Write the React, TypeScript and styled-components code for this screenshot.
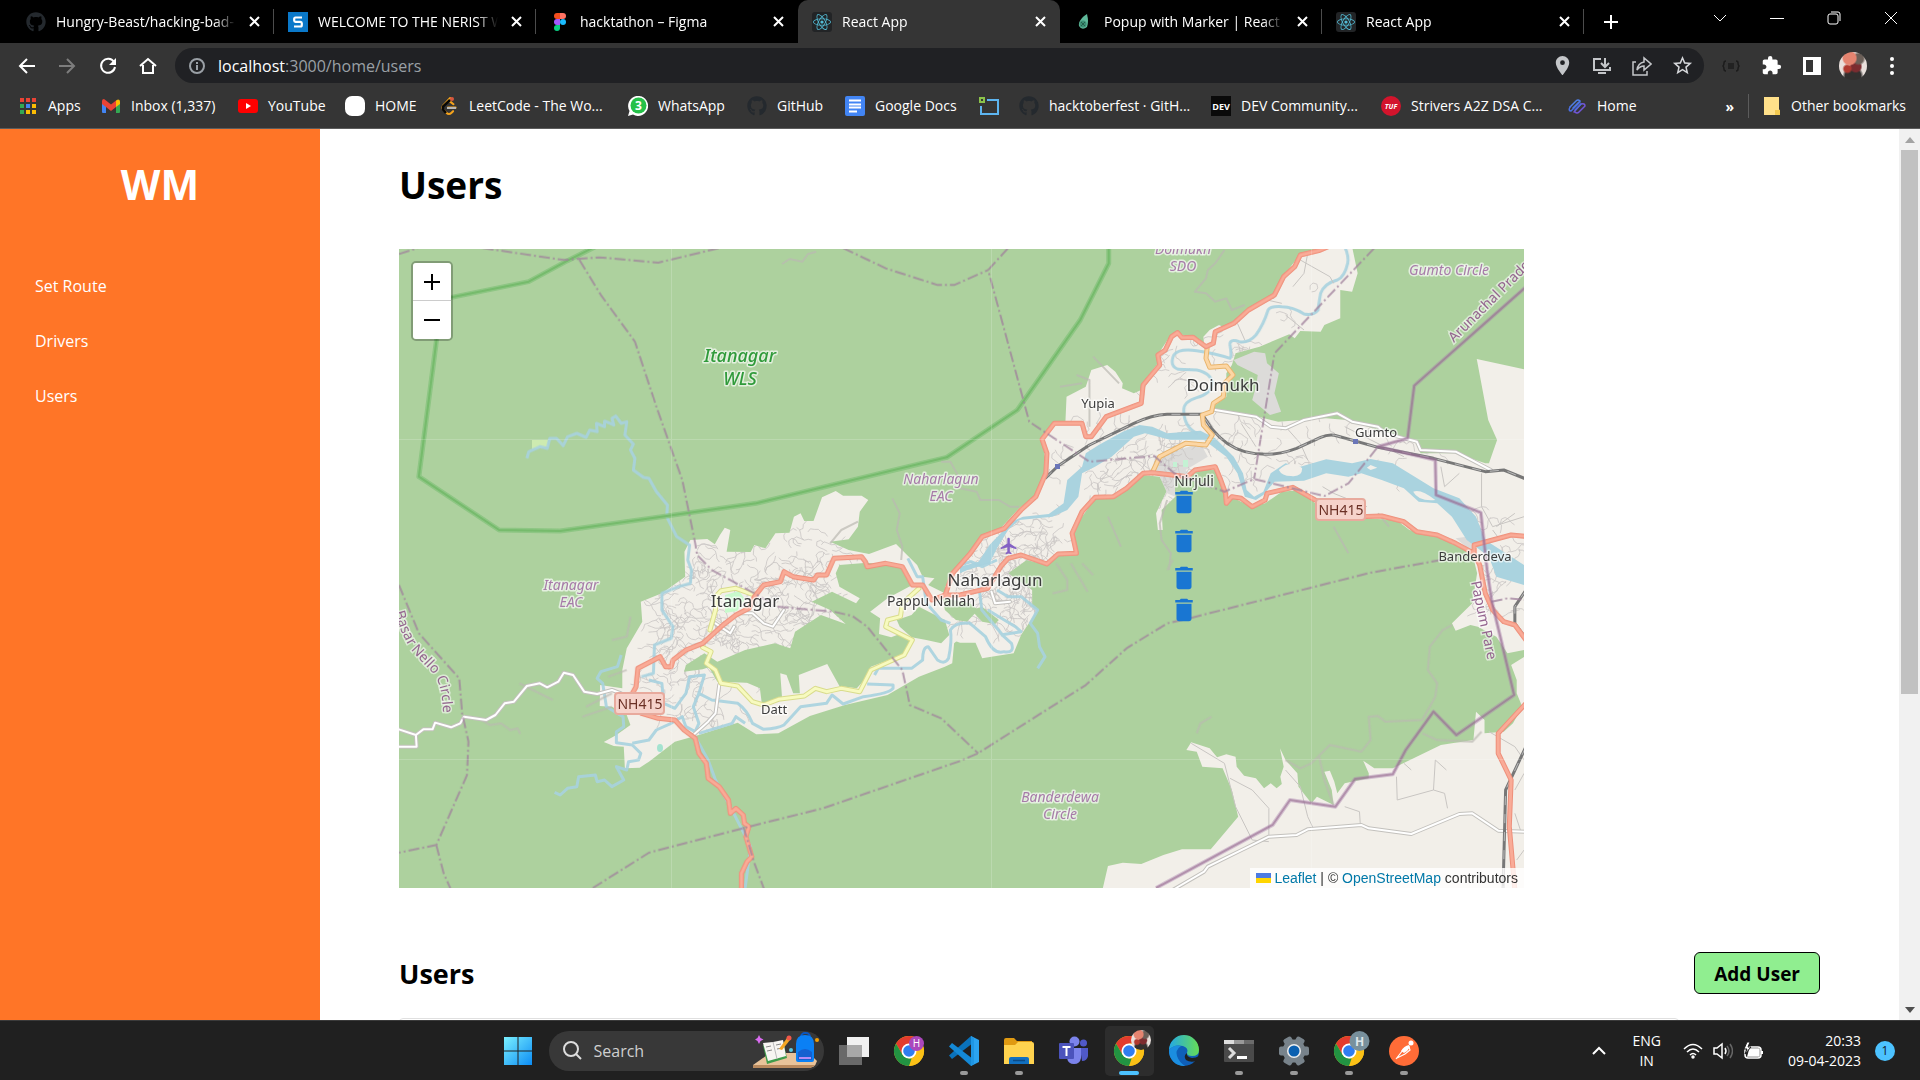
import React from 'react';
import styled, { createGlobalStyle } from 'styled-components';
import { FaGithub, FaReact } from 'react-icons/fa';
import { MdDelete, MdExtension, MdFlight, MdLocationOn, MdStarBorder } from 'react-icons/md';
import { SiLeetcode } from 'react-icons/si';

const ui = '"Segoe UI", "Open Sans", "Noto Sans", sans-serif';
const mapFont = '"Noto Sans", "Open Sans", sans-serif';

const GlobalStyle = createGlobalStyle`
  *, *::before, *::after { box-sizing: border-box; }
  html, body { margin: 0; height: 100%; overflow: hidden; }
  body { font-family: ${ui}; background: #fff; }
  button { font: inherit; color: inherit; background: none; border: 0; padding: 0; cursor: pointer; }
  a { color: inherit; text-decoration: none; }
  h1, h2, p, ul { margin: 0; padding: 0; }
  svg { display: block; flex: none; }
`;

const Screen = styled.div`
  display: flex;
  flex-direction: column;
  height: 100vh;
`;

/* ---------- browser chrome ---------- */

const Browser = styled.header`
  background: #353535;
  border-bottom: 1px solid #5c5c5c;
  color: #fff;
  font-size: 14px;
`;

const TabStrip = styled.div`
  display: flex;
  height: 43px;
  padding-left: 12px;
  background: #000;
`;

const Tab = styled.div<{ $active?: boolean; $divider?: boolean }>`
  position: relative;
  display: flex;
  align-items: center;
  flex: 0 1 262px;
  min-width: 0;
  gap: 10px;
  padding: 0 12px 0 14px;
  border-radius: 10px 10px 0 0;
  background: ${p => (p.$active ? '#353535' : 'transparent')};
  ${p =>
    p.$divider &&
    `&::after { content: ''; position: absolute; right: 0; top: 9px; width: 1px; height: 25px; background: #4c4c4c; }`}
`;

const TabTitle = styled.span`
  flex: 1;
  min-width: 0;
  overflow: hidden;
  white-space: nowrap;
  line-height: 20px;
  mask-image: linear-gradient(90deg, #000 88%, transparent);
`;

const IconButton = styled.button<{ $w?: number }>`
  display: flex;
  align-items: center;
  justify-content: center;
  flex: none;
  width: ${p => p.$w ?? 16}px;
`;

const WindowControls = styled.div`
  display: flex;
  margin-left: auto;
  height: 36px;
`;

const Toolbar = styled.div`
  display: flex;
  align-items: center;
  height: 45px;
  padding: 0 10px 0 7px;
`;

const Omnibox = styled.label`
  display: flex;
  align-items: center;
  flex: 1;
  height: 35px;
  margin: 0 7px;
  padding: 0 2px 0 13px;
  border-radius: 18px;
  background: #202124;
  position: relative;
`;

const Address = styled.input`
  position: absolute;
  inset: 0 170px 0 42px;
  border: 0;
  outline: 0;
  background: transparent;
  color: transparent;
  font: 16px ${ui};
`;

const Url = styled.span`
  flex: 1;
  padding-left: 12px;
  font-size: 16px;
  color: #9aa0a6;
  b { font-weight: 400; color: #fff; }
`;

const Avatar = styled.span<{ $size: number }>`
  display: block;
  width: ${p => p.$size}px;
  height: ${p => p.$size}px;
  border-radius: 50%;
  background:
    radial-gradient(circle at 38% 22%, #e58470 0 22%, transparent 28%),
    radial-gradient(circle at 70% 24%, #6b5f58 0 16%, transparent 24%),
    radial-gradient(circle at 30% 60%, #b0392f 0 12%, transparent 20%),
    radial-gradient(circle at 60% 52%, #7c2c30 0 22%, transparent 30%),
    radial-gradient(circle at 50% 86%, #33302f 0 28%, transparent 38%),
    #e9e0dc;
`;

const Bookmarks = styled.nav`
  display: flex;
  align-items: center;
  height: 40px;
  padding: 0 14px 4px 18px;
`;

const Bookmark = styled.a<{ $w?: number }>`
  display: flex;
  align-items: center;
  gap: 10px;
  flex: 0 1 ${p => (p.$w ? `${p.$w}px` : 'auto')};
  min-width: 0;
  white-space: nowrap;
  line-height: 20px;
`;

const Separator = styled.i`
  width: 1px;
  height: 24px;
  margin: 0 14px;
  background: #5c5c5c;
`;

const More = styled.button`
  margin-left: auto;
  font-weight: 700;
  font-size: 14px;
`;

/* ---------- page ---------- */

const Page = styled.div`
  display: flex;
  flex: 1;
  min-height: 0;
  background: #fff;
`;

const Sidebar = styled.aside`
  flex: 0 0 320px;
  background: #ff7527;
  color: #fff;
`;

const Brand = styled.p`
  padding-top: 28px;
  text-align: center;
  font-size: 41px;
  line-height: 54px;
  font-weight: 700;
`;

const Menu = styled.ul`
  list-style: none;
  margin-top: 48px;
  padding-left: 35px;
  font-size: 16px;
  line-height: 55px;
`;

const Main = styled.main`
  flex: 1;
  min-width: 0;
  padding: 0 79px;
  overflow: hidden;
`;

const Title = styled.h1`
  padding: 31px 0 39px;
  font-size: 37px;
  line-height: 50px;
`;

const SectionHead = styled.div`
  display: flex;
  align-items: center;
  justify-content: space-between;
  margin: 64px 0 24px;
`;

const SectionTitle = styled.h2`
  padding-top: 2px;
  font-size: 27px;
  line-height: 40px;
`;

const AddButton = styled.button`
  height: 42px;
  padding: 2px 19px 0;
  border: 1px solid #000;
  border-radius: 6px;
  background: #90ee90;
  font-size: 19px;
  line-height: 26px;
  font-weight: 700;
`;

const TableCard = styled.section`
  max-width: 1280px;
  height: 200px;
  border: 1px solid #e0e0e0;
  border-radius: 4px;
`;

const ScrollTrack = styled.div`
  display: flex;
  flex-direction: column;
  align-items: center;
  justify-content: space-between;
  flex: 0 0 21px;
  padding: 8px 0 7px;
  background: #f1f1f1;
`;

const ScrollArea = styled.div`
  flex: 1;
  width: 17px;
  padding: 7px 0;
`;

const ScrollThumb = styled.div`
  height: 64%;
  background: #c1c1c1;
`;

/* ---------- map ---------- */

const MapBox = styled.section`
  position: relative;
  width: 100%;
  max-width: 1125px;
  height: 639px;
  overflow: hidden;
  background: #add19e;
`;

const ZoomControl = styled.div`
  position: absolute;
  left: 12px;
  top: 12px;
  width: 42px;
  border: 2px solid rgba(0, 0, 0, 0.25);
  border-radius: 5px;
  background-clip: padding-box;
`;

const ZoomButton = styled.button`
  display: flex;
  align-items: center;
  justify-content: center;
  width: 38px;
  height: 38px;
  background: #fff;
  &:first-child { border-bottom: 1px solid #ccc; border-radius: 3px 3px 0 0; }
  &:last-child { border-radius: 0 0 3px 3px; }
`;

const Marker = styled.button<{ $x: number; $y: number }>`
  position: absolute;
  left: ${p => p.$x}px;
  top: ${p => p.$y}px;
  color: #1976d2;
`;

const Attribution = styled.div`
  position: absolute;
  right: 0;
  bottom: 0;
  display: flex;
  align-items: center;
  gap: 3px;
  height: 20px;
  padding: 0 6px;
  background: rgba(255, 255, 255, 0.8);
  color: #333;
  font: 14px/20px "Liberation Sans", Arial, sans-serif;
  a { color: #0078a8; }
`;

// The map is traced in four sheets, each with its own origin.
const sheets = {
  a: 'translate(390 240) scale(.3699 .33333)',
  b: 'translate(960 240) scale(.3699 .33333)',
  c: 'translate(390 560) scale(.3699 .33333)',
  d: 'translate(960 560) scale(.3699 .33333)',
};
type SheetPaths = { a?: string; b?: string; c?: string; d?: string };

const Layer = ({ a, b, c, d, ...rest }: SheetPaths & Record<string, unknown>) => (
  <g strokeLinejoin="round" fill="none" {...rest}>
    {a && <path d={a} transform={sheets.a} vectorEffect="non-scaling-stroke" />}
    {b && <path d={b} transform={sheets.b} vectorEffect="non-scaling-stroke" />}
    {c && <path d={c} transform={sheets.c} vectorEffect="non-scaling-stroke" />}
    {d && <path d={d} transform={sheets.d} vectorEffect="non-scaling-stroke" />}
  </g>
);

const Road = ({ paths, casing, fill, w }: { paths: SheetPaths; casing: string; fill: string; w: number }) => (
  <>
    <Layer {...paths} stroke={casing} strokeWidth={w} strokeLinecap="round" />
    <Layer {...paths} stroke={fill} strokeWidth={w - 2} strokeLinecap="round" />
  </>
);

const land: SheetPaths = {
  c: 'M635,625L632,560 605,558 578,546 612,525 650,495 640,465 600,440 567,438 568,375 628,385 628,330 640,265 682,185 678,125 735,100 798,50 796,-25 812,-60 858,-63 878,-47 892,-75 905,-97 920,-90 910,-25 975,-24 985,-45 1015,-35 1042,-80 1080,-82 1092,-130 1110,-140 1120,-117 1145,-117 1168,-188 1205,-207 1225,-193 1275,-193 1293,-180 1270,-145 1265,-100 1240,-62 1190,-55 1240,-30 1295,-18 1368,-48 1425,15 1440,50 1472,55 1455,75 1500,100 1580,100 1580,200 1525,250 1520,310 1500,320 1430,350 1345,405 1230,435 1135,468 1050,520 990,523 940,488 835,525 770,545 700,605 675,623Z',
  b: 'M-40,1065L-40,1040 -5,985 25,945 60,885 110,865 160,805 205,770 235,690 222,600 250,550 285,545 288,470 340,440 355,390 398,375 420,395 440,430 438,445 470,460 490,450 500,420 535,370 540,335 570,285 590,278 660,315 658,290 675,270 700,255 715,262 780,210 850,165 880,100 915,50 975,20 1060,20 1075,100 1060,155 1028,150 1028,235 985,255 975,275 920,273 905,295 890,283 810,320 745,340 735,375 720,400 720,470 690,495 685,510 770,520 860,545 990,535 1045,540 1130,570 1230,600 1245,640 1340,640 1420,670 1430,670 1452,600 1428,540 1397,357 1525,388 1568,388 1568,1220 1480,1240 1450,1190 1400,1160 1380,1155 1340,1172 1330,1150 1385,1090 1398,1000 1385,940 1340,905 1280,885 1215,870 1180,840 1090,835 960,790 920,750 870,755 825,790 790,800 740,775 718,790 710,730 690,690 640,690 620,710 580,720 582,770 545,810 548,870 535,870 530,820 560,750 540,710 495,705 460,745 410,775 365,775 330,830 305,880 315,940 260,945 235,975 180,960 130,1000 195,1050 195,1100 210,1110 165,1185 145,1240 85,1250 60,1255 42,1208 0,1208 -20,1200 -40,1130Z',
  d: 'M385,990L400,918 440,908 490,912 550,885 600,868 678,868 752,770 735,690 710,625 655,620 640,575 612,570 625,547 675,565 695,592 720,583 745,590 748,620 768,647 800,655 822,685 840,670 856,685 870,672 866,650 875,620 865,565 880,600 912,640 915,680 950,730 965,710 1010,735 1005,690 985,635 1000,632 1012,665 1020,700 1040,670 1105,655 1105,640 1090,602 1120,625 1170,625 1300,555 1330,550 1388,540 1395,455 1418,480 1418,520 1470,515 1495,490 1520,440 1505,400 1505,360 1490,315 1540,280V1000H385Z',
};

const woods: SheetPaths = {
  c: 'M1205,40L1215,15 1290,8 1380,20 1412,75 1345,115 1298,155 1325,175 1322,222 1355,232 1378,222 1410,245 1385,285 1300,320 1290,350 1262,385 1215,378 1182,312 1105,345 1108,400 1090,400 1072,345 1055,340 1060,415 1005,430 1000,385 965,368 885,365 862,322 845,328 795,335 800,315 850,280 885,305 960,270 1040,250 1082,265 1095,215 1165,165 1232,192 1190,150 1140,125 1195,95 1260,130 1270,115 1215,80ZM1378,200L1370,180 1410,165 1430,140 1500,180 1512,225 1490,250 1450,240 1410,232ZM1495,115L1568,130 1590,150 1560,185 1530,180 1500,150Z',
  d: 'M30,150L60,140 105,180 95,192 60,185Z',
};

const greyAreas: SheetPaths = {
  b: 'M740,360L795,335 825,340 830,370 862,400 850,460 868,515 838,525 790,480 800,440 805,405 750,375ZM530,650L650,610 670,650 610,690 620,705 580,720 582,770 560,760 540,710 525,700ZM1340,895L1370,890 1400,910 1385,935Z',
};

const waterAreas: SheetPaths = {
  b: 'M340,640L375,615 440,575 485,555 520,560 560,580 650,572 690,595 740,650 765,700 775,750 795,770 820,755 840,700 880,670 920,680 990,658 1060,670 1110,657 1170,670 1280,745 1350,775 1395,830 1420,900 1525,975 1568,1000 1568,1040 1525,1035 1450,1010 1430,950 1370,900 1330,830 1290,790 1240,785 1200,745 1140,720 1085,700 1050,710 990,700 930,722 850,725 820,765 800,780 770,770 750,700 720,650 660,600 570,600 500,580 470,590 440,620 410,650 365,680 330,700 320,770 290,810 250,830 160,840 130,870 100,925 80,970 20,990 0,1000 0,980 50,965 80,915 140,845 170,830 240,822 280,790 290,720 330,680Z',
};

const islands: SheetPaths = {
  b: 'M862,690Q895,655 925,685Q925,712 895,708Q870,708 862,690ZM1100,683L1110,675 1128,683 1110,690ZM1225,755Q1245,745 1285,780Q1240,785 1225,755Z',
};

const rivers: SheetPaths = {
  a: 'M370,655L375,635 405,620 425,625 432,595 450,595 468,617 480,590 505,580 530,592 540,570 560,575 558,550 580,560 580,543 605,555 600,535 610,528 625,550 640,545 635,585 658,612 650,630 662,655 658,690 685,712 700,715 720,755 750,795 748,830 775,890 810,915 805,960 815,990 812,1030 780,1040 735,1060 735,1110 765,1160 760,1195 715,1215 712,1300 680,1310',
  b: 'M1040,20Q1052,50 1048,70Q1040,110 1020,120Q985,130 975,160Q970,190 968,210Q955,228 930,222Q900,200 870,200Q838,198 833,210Q820,255 800,285Q780,310 755,305Q728,295 730,315Q735,350 730,355Q690,340 640,332Q590,325 578,345Q565,378 590,388L640,390Q680,400 682,430Q680,460 640,473Q605,485 605,510Q605,560 640,580',
  c: 'M625,285L615,320 570,335 560,355 575,370 585,440 630,470 632,500 612,515 612,548 655,555 678,580 672,600 645,605 640,630 612,620 632,660 600,680 580,660 560,665 555,645 510,650 505,680 480,685 460,705 445,697M655,550L700,540 720,510 760,490 790,470 800,500 825,515 835,490 820,440 835,400 850,345 810,350 800,400 770,445 740,430 735,370 700,360M835,400L870,420 940,430Q965,450 980,490L1010,508Q1050,505 1065,495L1110,440 1180,430 1195,405 1225,432 1280,410Q1350,400 1360,385L1360,375 1290,372M1310,345L1320,325 1410,325 1440,300Q1440,260 1455,260L1480,300Q1500,315 1510,295Q1520,240 1515,210Q1530,185 1568,190L1610,230Q1630,285 1660,275Q1690,280 1680,250L1660,230 1600,150 1590,60M835,520L925,490 935,470 960,490M1400,-5L1425,50 1440,50 1450,130 1490,180 1515,190M825,530L860,600 880,660 920,740 975,860 960,984',
  d: 'M100,90L130,110 165,110 210,150 190,190 210,220 215,260 230,290 210,325M75,150L150,200 165,215 110,225M0,15L30,5 60,20 100,0',
};

const tracks: SheetPaths = {
  a: 'M1060,72L1080,57 1115,65 1130,42 1152,35M1490,665L1515,665 1535,705M1358,775L1378,820 1370,870 1385,920 1382,960M1265,845L1220,870 1190,910',
  b: 'M715,30L690,70 670,90 665,115 635,155 665,160 690,185 720,175 735,210 770,195M0,745L45,755 55,780 105,780 135,800 160,800M560,780L540,850 545,900 570,940 565,990M315,405L350,420 350,560M360,350L430,430M270,440L330,430M1130,820L1160,860M400,830L435,920M1010,860L1050,940',
  c: 'M240,475L270,495 300,490 325,510 345,505 352,522M350,370L440,420M530,440L600,400M520,470L600,440M650,170L640,230 600,240M590,350L640,330',
  d: 'M1330,195L1305,210 1270,260 1265,330 1290,370 1285,410 1250,480 1150,485 1130,468 1105,470 1110,540 1085,575 1000,555 950,610 920,625 880,600M1250,520L1290,540 1385,545 1410,515M640,520L650,490 680,470M250,100L290,90 290,60 260,10M300,10L345,95M330,10L360,45M970,585L985,660 1010,735M560,30L575,0',
};

const lanes: SheetPaths = {
  b: 'M920,60L1000,110 1010,130M940,40L930,100 900,140M830,180L870,190M880,225L930,270M750,250L770,300M880,560L920,610 940,660M760,550L800,620M1040,560L1200,650M1410,700L1410,800 1440,860 1525,830M1300,680L1310,740 1350,700M1450,860L1500,820M1440,870L1460,900M980,740L1010,760 1100,800',
  d: 'M625,550L715,610 745,740 790,840 835,845M730,655L790,690 835,745 835,830M880,630L920,680 940,770 955,805M1180,650L1182,720 1280,690 1285,600 1315,630M1280,690L1310,700 1318,745M1040,740L1080,755 1082,790M1430,515L1500,560 1525,600M1500,690L1525,640M1500,760L1515,810M1505,900L1525,870M1200,610L1220,630',
};

const trunk: SheetPaths = {
  b: 'M1000,18L970,32 920,45 905,80 875,110 850,165 780,210 740,250 690,275 685,310 665,320 630,292 600,293 588,278 572,290 555,330 535,345 540,375 495,435 490,490 395,530 355,590 340,590 330,550 255,550 222,598 235,640 232,700 205,770 165,810 120,865 60,890 28,940 -20,1000 -40,1065M-40,1065L0,1065 75,1045 110,980 130,955 165,945 235,972 265,942 315,940 303,880 330,815 365,772 415,770 450,745 495,700 520,698 615,710 635,690 690,680 705,720 718,760 720,790 735,770 760,775 790,800 825,780 830,760 900,742 960,780 1080,830 1140,828 1200,845 1235,875 1290,885 1340,910 1390,940 1405,975 1420,1060 1440,1110 1470,1145 1500,1155 1530,1200M1390,940L1390,915 1430,903 1490,885 1540,890',
  c: 'M1500,105L1465,120 1440,75 1412,75 1385,20 1340,10 1290,20 1285,5 1275,-10 1200,-5 1180,45 1155,45 1145,60 1090,50 1065,35 1055,65 1010,75 985,110 970,145 935,165 900,195 845,250 800,270 765,300 760,320 745,320 730,290 670,325 665,380 650,410 680,460 725,475 770,480 795,510 825,535 835,580 855,610 860,655 890,680 915,720 920,760 935,745 955,765 958,790 970,800 962,830 978,890 965,905 950,940 950,990',
  d: 'M1530,430L1455,520 1455,580 1490,660 1485,800 1500,990',
};

const primary: SheetPaths = {
  b: 'M668,325L665,355 675,382 720,378 738,405 715,430 712,470 685,490 680,515 655,525 658,555 682,585 665,615 610,610 540,650 520,698',
};

const secondary: SheetPaths = {
  c: 'M865,210L880,150 880,110 895,92 935,85 985,105M845,262L868,275 855,310 880,330 895,370 940,378 980,425 1010,435 1050,418 1120,408 1150,385 1180,395 1220,385 1270,395 1300,330 1360,300 1390,285 1412,240 1340,200 1345,180 1380,170 1385,130 1430,85',
};

const tertiary: SheetPaths = {
  b: 'M690,510L800,530 840,560 880,565 930,540 1020,520 1060,545 1130,560 1150,580 1235,605 1245,630 1340,635 1435,690',
  c: 'M24,508L70,525 72,560 24,560M70,525L90,508 115,508 122,488 165,502 190,490 200,470 260,480 285,465 310,430 335,425 370,378 405,370 425,382 455,365 470,338 495,345 525,395 560,402 600,390 625,400M890,375L880,460 860,485 820,525M945,160L980,160 1010,190 1035,200 1065,150M880,190L920,220 930,200',
  d: 'M575,990L660,935 670,920 835,830 910,825 940,808 1085,795 1105,805 1220,822 1350,762 1385,760 1455,812 1530,815M85,95L95,130 135,125',
};

const rail: SheetPaths = {
  b: 'M230,715L265,678 350,615 470,550Q520,525 560,523L655,523 680,565Q720,620 770,635Q840,655 910,625L975,592Q1000,580 1020,588L1130,622 1280,655 1420,695 1470,690 1530,717',
  d: 'M1530,90L1500,140 1500,190 1530,235M1530,560L1475,690 1468,990',
};

const districts: SheetPaths = {
  a: 'M24,42L75,24M250,24L470,60 565,52 725,68 890,24M512,60L570,165 662,305 720,500 790,720 825,910 830,945 870,990 985,1060 1045,1100 1200,1115 1250,1128 1290,1160 1385,1290 1405,1395 1490,1435 1590,1540M1225,24L1340,85 1480,135 1525,135 1617,90',
  b: 'M130,24L76,90 187,545 350,665 525,648 580,700 715,755 795,717 985,768 1050,730 1130,620M1120,24L850,340 795,717',
  c: 'M24,75L78,220 187,355 195,460 212,545 208,645 125,855 24,878M125,855L145,940 165,990M548,984L700,878 970,800 1170,745 1541,603 1589,580 1881,375 1991,265 2101,190 2171,172 2651,38 2841,0M955,800L985,910 1012,990',
  d: 'M1437,125L1480,115 1530,120',
};

const stateLine: SheetPaths = {
  b: 'M1541,130L1228,437 1210,595 1130,620 1285,660 1287,765 1408,818 1425,990 1437,1080 1498,1365 1342,1485 1280,1415 1205,1530 1170,1603 1068,1617 1015,1700 892,1680 845,1755 530,1944',
};

const reserve: SheetPaths = {
  a: 'M555,20L480,62 375,125 140,178 78,710 295,870 460,873 990,790 1505,652 1696,510 1866,240 1943,70 1943,20',
};

// Small residential streets: short wandering lines around each town centre.
const towns = [
  [735, 600, 95, 55, 150], [700, 670, 60, 55, 80], [800, 570, 60, 40, 50], [1005, 590, 50, 50, 120],
  [1010, 545, 55, 40, 60], [1190, 365, 70, 55, 50], [1105, 455, 60, 45, 30], [1215, 455, 90, 30, 40],
  [1505, 560, 40, 55, 35], [1330, 450, 110, 30, 24], [1250, 300, 70, 60, 16], [1140, 475, 40, 40, 45],
];
const streets = (() => {
  let seed = 97;
  const rnd = () => ((seed = (seed * 16807) % 2147483647) / 2147483647);
  let d = '';
  for (const [cx, cy, rx, ry, n] of towns) {
    for (let i = 0; i < n; i++) {
      const t = rnd() * 6.283, r = Math.sqrt(rnd());
      let x = cx + Math.cos(t) * rx * r, y = cy + Math.sin(t) * ry * r, a = rnd() * 6.283;
      d += `M${x.toFixed(1)},${y.toFixed(1)}`;
      for (let k = 0; k < 6; k++) {
        a += (rnd() - 0.5) * 2.4;
        x += Math.cos(a) * 4;
        y += Math.sin(a) * 4;
        d += `L${x.toFixed(1)},${y.toFixed(1)}`;
      }
    }
  }
  return d;
})();

type Place = { x: number; y: number; s: number; k: 'town' | 'admin' | 'park'; t: string };
const places: Place[] = [
  { x: 740, y: 362, s: 18, k: 'park', t: 'Itanagar' },
  { x: 740, y: 385, s: 18, k: 'park', t: 'WLS' },
  { x: 941, y: 484, s: 14, k: 'admin', t: 'Naharlagun' },
  { x: 941, y: 501, s: 14, k: 'admin', t: 'EAC' },
  { x: 571, y: 590, s: 14, k: 'admin', t: 'Itanagar' },
  { x: 571, y: 607, s: 14, k: 'admin', t: 'EAC' },
  { x: 1183, y: 254, s: 14, k: 'admin', t: 'Doimukh' },
  { x: 1183, y: 271, s: 14, k: 'admin', t: 'SDO' },
  { x: 1449, y: 275, s: 14, k: 'admin', t: 'Gumto Circle' },
  { x: 1060, y: 802, s: 14, k: 'admin', t: 'Banderdewa' },
  { x: 1060, y: 819, s: 14, k: 'admin', t: 'Circle' },
  { x: 1223, y: 391, s: 17, k: 'town', t: 'Doimukh' },
  { x: 1098, y: 408, s: 13, k: 'town', t: 'Yupia' },
  { x: 1376, y: 437, s: 13, k: 'town', t: 'Gumto' },
  { x: 1194, y: 486, s: 14, k: 'town', t: 'Nirjuli' },
  { x: 1475, y: 561, s: 13, k: 'town', t: 'Banderdeva' },
  { x: 745, y: 607, s: 17, k: 'town', t: 'Itanagar' },
  { x: 995, y: 586, s: 17, k: 'town', t: 'Naharlagun' },
  { x: 931, y: 606, s: 14, k: 'town', t: 'Pappu Nallah' },
  { x: 774, y: 714, s: 13, k: 'town', t: 'Datt' },
];

const Label = styled.text<{ $k: Place['k']; $s: number }>`
  font-family: ${mapFont};
  font-size: ${p => p.$s}px;
  font-weight: ${p => (p.$k === 'park' ? 500 : 400)};
  font-style: ${p => (p.$k === 'town' ? 'normal' : 'italic')};
  fill: ${p => ({ town: '#3c3c3c', admin: '#a77ba9', park: '#2f9a3a' })[p.$k]};
  stroke: rgba(255, 255, 255, 0.65);
  stroke-width: 3px;
  stroke-linejoin: round;
  paint-order: stroke;
  text-anchor: middle;
`;

const RoadLabel = styled.text`
  font: 14px ${mapFont};
  fill: #94648f;
  stroke: rgba(255, 255, 255, 0.55);
  stroke-width: 3px;
  paint-order: stroke;
`;

const Shield = ({ x, y }: { x: number; y: number }) => (
  <g>
    <rect x={x} y={y} width="49" height="21" rx="3" fill="#f6d3cb" stroke="#e8aa9d" strokeWidth="2" />
    <text x={x + 25} y={y + 16} textAnchor="middle" fontFamily={mapFont} fontSize="14" fill="#6b3025">NH415</text>
  </g>
);

const MapArt = () => (
  <svg width="1125" height="639" viewBox="399 249 1125 639" role="img" aria-label="Map of Itanagar">
    <defs>
      <clipPath id="town-land">
        <path d={land.b} transform={sheets.b} />
        <path d={land.c} transform={sheets.c} />
      </clipPath>
      <path id="nello" d="M395,612 Q400,632 411,650 Q421,661 432,672 Q443,684 443,716 L443,740" />
    </defs>
    <Layer {...land} fill="#f2efe9" />
    <Layer {...greyAreas} fill="#dcdbd9" />
    <g clipPath="url(#town-land)">
      <path d={streets} fill="none" stroke="#c9c6c4" strokeWidth="1" opacity=".8" />
    </g>
    <Layer {...woods} fill="#add19e" />
    <path d="M532,440h16v7l-16,2z" fill="#cdebb0" />
    <path d="M725,595l14,-4 6,8-8,12-12,2z" fill="#c8facc" />
    <ellipse cx="660" cy="748" rx="3" ry="4" fill="#a5e3d0" />
    <path d="M1173,462h4v5h-4zM1183,460h5v7h-5z" fill="#c4f2d4" />
    <Layer {...waterAreas} fill="#aad3df" />
    <Layer {...islands} fill="#f2efe9" />
    <Layer {...rivers} stroke="#a8d2df" strokeWidth="3" opacity=".9" />
    <Layer {...reserve} stroke="#86c37d" strokeWidth="5" opacity=".8" />
    <Layer {...reserve} stroke="#6fb866" strokeWidth="2" opacity=".8" />
    <Layer {...tracks} stroke="#bbb9b2" strokeWidth="2" opacity=".7" />
    <Layer {...lanes} stroke="#c8c5c2" strokeWidth="1" />
    <Road paths={tertiary} casing="#c3c1bd" fill="#fff" w={4} />
    <Layer {...rail} stroke="#777" strokeWidth="3" />
    <Layer {...rail} stroke="#bbb" strokeWidth="1" strokeDasharray="9 9" />
    <Road paths={secondary} casing="#d9dc8c" fill="#f7fabf" w={5} />
    <Road paths={primary} casing="#e8b46c" fill="#fcd6a4" w={5} />
    <Road paths={trunk} casing="#ee8f7a" fill="#f9ab97" w={5} />
    <Layer {...districts} stroke="#a0819c" strokeWidth="2" strokeDasharray="11 3 2 3" opacity=".75" />
    <Layer {...stateLine} stroke="#a97fac" strokeWidth="4" opacity=".4" />
    <Layer {...stateLine} stroke="#96698f" strokeWidth="2" opacity=".55" />
    <path d="M671.5,249V888M991.5,249V888M1311.5,249V888M399,439.5H1524M399,759.5H1524" stroke="#fff" opacity=".18" />
    <path d="M1055,464h5v5h-5zM1353,439h5v5h-5z" fill="#6b76b8" />
    <g transform="translate(999 536)"><MdFlight size={20} color="#8461c4" /></g>
    <RoadLabel transform="translate(1454 343) rotate(-45)">Arunachal Pradesh</RoadLabel>
    <RoadLabel transform="translate(1471 582) rotate(78)">Papum Pare</RoadLabel>
    <RoadLabel><textPath href="#nello">Basar Nello Circle</textPath></RoadLabel>
    {places.map(p => (
      <Label key={`${p.t}${p.x}`} x={p.x} y={p.y} $k={p.k} $s={p.s}>{p.t}</Label>
    ))}
    <Shield x={1316} y={499} />
    <Shield x={615} y={693} />
  </svg>
);

/* ---------- drawings ---------- */

const line = { fill: 'none', stroke: 'currentColor', strokeWidth: 2 };

const Cross = () => <svg width="11" height="11" viewBox="0 0 11 11" {...line}><path d="M1,1L10,10M10,1L1,10" /></svg>;

const Favicon = ({ kind }: { kind: string }) => {
  if (kind === 'github') return <FaGithub size={20} color="#24292e" />;
  if (kind === 'react')
    return (
      <svg width="20" height="20" viewBox="0 0 20 20">
        <rect width="20" height="20" rx="3" fill="#222426" />
        <g transform="translate(1 1)"><FaReact size={18} color="#53bcd6" /></g>
      </svg>
    );
  if (kind === 's')
    return (
      <svg width="20" height="20" viewBox="0 0 20 20">
        <rect width="20" height="20" fill="#0a78c9" />
        <path d="M14,5.5H7.5Q6.2,5.5 6.2,7V8.5Q6.2,9.8 7.5,9.8H12.5Q13.8,9.8 13.8,11.2V13Q13.8,14.5 12.5,14.5H6" fill="none" stroke="#fff" strokeWidth="2.2" />
      </svg>
    );
  if (kind === 'figma')
    return (
      <svg width="20" height="20" viewBox="0 0 20 20">
        <path d="M10,1H7a3,3 0 0 0 0,6h3z" fill="#f24e1e" /><path d="M10,1h3a3,3 0 0 1 0,6h-3z" fill="#ff7262" />
        <path d="M10,7H7a3,3 0 0 0 0,6h3z" fill="#a259ff" /><circle cx="13" cy="10" r="3" fill="#1abcfe" />
        <path d="M10,13H7a3,3 0 1 0 3,3z" fill="#0acf83" />
      </svg>
    );
  return (
    <svg width="20" height="20" viewBox="0 0 20 20">
      <path d="M13,2C8,5 4,10 5,14q3,5 8,1Q15,10 13,2z" fill="#5fb99a" /><circle cx="9" cy="12" r="3.5" fill="#3c8f74" /><path d="M7,14l4-4M7,10l4,4" stroke="#24604d" />
    </svg>
  );
};

const BookmarkIcon = ({ kind }: { kind: string }) => {
  const box = { width: 20, height: 20, viewBox: '0 0 20 20' };
  switch (kind) {
    case 'apps': {
      const c = ['#ea4335', '#ea4335', '#ea4335', '#34a853', '#4285f4', '#fbbc04', '#34a853', '#fbbc04', '#fbbc04'];
      return <svg {...box}>{c.map((f, i) => <rect key={i} x={2 + (i % 3) * 6} y={2 + Math.floor(i / 3) * 6} width="4" height="4" fill={f} />)}</svg>;
    }
    case 'gmail':
      return (
        <svg {...box}>
          <path d="M1,5v11q0,1 1,1h3V8z" fill="#4285f4" /><path d="M19,5v11q0,1-1,1h-3V8z" fill="#34a853" />
          <path d="M15,4.5l2-1q2,0 2,2V8l-4,3z" fill="#fbbc04" /><path d="M1,8V5q0-2 2-2l2,1.5 5,4 5-4V11l-5,4-5-4z" fill="#ea4335" />
        </svg>
      );
    case 'youtube':
      return <svg {...box}><rect y="3" width="20" height="14" rx="3" fill="#f00" /><path d="M8,7v6l5-3z" fill="#fff" /></svg>;
    case 'home':
      return <svg {...box}><rect width="20" height="20" rx="7" fill="#fff" /></svg>;
    case 'leetcode':
      return (
        <svg {...box}><g transform="translate(1 1)"><SiLeetcode size={18} color="#f5a31c" /></g><path d="M11,4L4,10.5v3l3,3.5" fill="none" stroke="#070706" strokeWidth="2.5" /><path d="M8,12h9" stroke="#b9b9b9" strokeWidth="2" /><circle cx="13" cy="3" r="2" fill="#d8573f" /></svg>
      );
    case 'whatsapp':
      return (
        <svg {...box}><path d="M0,20L1.5,15A10,10 0 1 1 5,18.5z" fill="#fff" /><circle cx="10.5" cy="9.5" r="8" fill="#25c149" /><text x="10.5" y="14" textAnchor="middle" fontSize="12" fontWeight="700" fill="#fff">3</text></svg>
      );
    case 'github':
      return <FaGithub size={20} color="#24292e" />;
    case 'docs':
      return <svg {...box}><rect width="20" height="20" rx="2" fill="#4285f4" /><path d="M4,4.5h12M4,8.5h12M4,11.5h12M4,15.5h8" stroke="#fff" strokeWidth="2" /></svg>;
    case 'square':
      return <svg {...box} fill="none"><path d="M8,4H19V18H2V10" stroke="#5db5f0" strokeWidth="2" /><rect x="1" y="2" width="4" height="4" stroke="#8bc34a" strokeWidth="2" /></svg>;
    case 'dev':
      return <svg {...box}><rect width="20" height="20" fill="#0a0a0a" /><text x="10" y="14" textAnchor="middle" fontSize="9" fontWeight="700" fill="#fff">DEV</text></svg>;
    case 'tuf':
      return <svg {...box}><circle cx="10" cy="10" r="10" fill="#d3142c" /><text x="10" y="13" textAnchor="middle" fontSize="7" fontWeight="700" fontStyle="italic" fill="#fff">TUF</text></svg>;
    case 'folder':
      return <svg width="18" height="20" viewBox="0 0 18 20"><path d="M1,1h15v12l1,2v4H1z" fill="#ffe08a" /><path d="M12,19v-5h5v5z" fill="#f3c94f" /></svg>;
    default:
      return (
        <svg {...box} fill="none" strokeWidth="1.5" strokeLinecap="round"><path d="M3,11L9,5q2-2 4,0L6,12" stroke="#4f7fe6" /><path d="M7,16L14,8q4-1 4,2l-6,6q-2,2-4,0" stroke="#7256d8" /><path d="M3,11q-2,4 1,4L13,6M8,14l6-6" stroke="#4b6fe0" /></svg>
      );
  }
};

const ChromeLogo = () => (
  <>
    <circle cx="15" cy="15" r="15" fill="#fbc116" />
    <path d="M2,7.5A15,15 0 0 1 28,7.5H15L8.5,18.8z" fill="#e33b2e" />
    <path d="M2,7.5L8.5,18.8 15,22.5H21.5L15,30A15,15 0 0 1 2,7.5z" fill="#229342" />
    <path d="M21.5,11.2L15,30A15,15 0 0 0 28,7.5H15z" fill="#fbc116" />
    <circle cx="15" cy="15" r="7.5" fill="#fff" /><circle cx="15" cy="15" r="5.8" fill="#2f7df0" />
  </>
);

const AppArt = ({ kind }: { kind: string }) => {
  const art: Record<string, React.ReactNode> = {
    windows: (
      <>
        <linearGradient id="win" x1="0" y1="0" x2="1" y2="1"><stop stopColor="#7af0ff" /><stop offset="1" stopColor="#0c8cf4" /></linearGradient>
        <path d="M1,1h13.5v13.5H1zM15.5,1H29v13.5H15.5zM1,15.5h13.5V29H1zM15.5,15.5H29V29H15.5z" fill="url(#win)" />
      </>
    ),
    taskview: (<><rect x="8" y="1" width="22" height="20" fill="#f0f0f0" /><rect y="9" width="23" height="20" fill="#777" opacity=".85" /><rect x="8" y="9" width="15" height="12" fill="#a8a8a8" /></>),
    chromeP: (<><ChromeLogo /><circle cx="22.5" cy="7.5" r="7.5" fill="#ab47bc" /><text x="22.5" y="11" textAnchor="middle" fontSize="10" fill="#fff">H</text></>),
    chrome: <ChromeLogo />,
    chromeG: (<><ChromeLogo /><circle cx="25.5" cy="5" r="10" fill="#78909c" /><text x="25.5" y="9.5" textAnchor="middle" fontSize="12" fontWeight="700" fill="#dfe6ea">H</text></>),
    code: (
      <>
        <path d="M22,0L30,4V26L22,30z" fill="#2ba3f0" /><path d="M22,0L0,19.5l3,3.5L22,8.5z" fill="#0a72bb" /><path d="M22,30L0,10.5 3,7 22,21.5z" fill="#1489d6" /><path d="M22,0L25,2V28l-3,2V0z" fill="#1f96e4" />
      </>
    ),
    folder: (
      <>
        <path d="M0,4q0-2 2-2h8l3,3H28v9H0z" fill="#e09a12" /><path d="M0,9h11l3-3h14q2,0 2,2V28H0z" fill="#ffd34f" /><path d="M5,28v-5q0-2 2-2h16q2,0 2,2v5z" fill="#1270c0" /><path d="M9,24.5h12" stroke="#0b4a86" strokeWidth="1.5" />
      </>
    ),
    teams: (
      <>
        <circle cx="24.5" cy="7" r="3.5" fill="#5059c9" /><circle cx="15.5" cy="5.5" r="5" fill="#7b83eb" /><path d="M21,12h8v8q-1,5-6,5z" fill="#5059c9" /><path d="M8,12h14v10q-1,6-7,6t-7-6z" fill="#7b83eb" /><rect y="7" width="15" height="16" rx="1" fill="#4b53bc" /><path d="M3.5,11h8M7.5,11v9" stroke="#fff" strokeWidth="2" />
      </>
    ),
    edge: (
      <>
        <linearGradient id="edge" x1="0" y1="0" x2="1" y2="0"><stop stopColor="#23a9e6" /><stop offset="1" stopColor="#66dc55" /></linearGradient>
        <circle cx="15" cy="15" r="15" fill="#0f5fb8" /><path d="M0,14A15,15 0 0 1 30,14q0,6-7,6-5,0-5-3 2-5-4-7Q5,8 0,14z" fill="url(#edge)" />
        <path d="M0,14q5-6 12-4-6,4-4,10t8,10A15,15 0 0 1 0,14z" fill="#1b8ee0" /><path d="M18,17q-1,4 5,5 4,0 7-2v3l-2,2q-7,2-11-1-3-4 1-7z" fill="#202020" />
      </>
    ),
    terminal: (
      <>
        <rect y="4" width="30" height="22" rx="1" fill="#4a4a4a" /><path d="M0,4h10v4H0z" fill="#ddd" /><path d="M10,4h10v4H10z" fill="#999" /><path d="M20,4h10v4H20z" fill="#6b6b6b" /><path d="M5,12l5,5-5,5" fill="none" stroke="#ddd" strokeWidth="3" /><path d="M13,21.5h10" stroke="#fff" strokeWidth="3" />
      </>
    ),
    settings: (
      <>
        {[0, 60, 120].map(r => <rect key={r} x="10.5" y="0" width="9" height="30" rx="2" fill="#78838b" transform={`rotate(${r + 30} 15 15)`} />)}
        <circle cx="15" cy="15" r="11.5" fill="#78838b" /><circle cx="15" cy="15" r="7" fill="#eee" /><circle cx="15" cy="15" r="5.5" fill="#0b60b0" />
      </>
    ),
    postman: (
      <>
        <circle cx="15" cy="15" r="15" fill="#ff6c37" /><circle cx="22" cy="7" r="2.5" fill="#fff" /><path d="M20,9q-5,1-8,6l3,2q4-2 6-6z" fill="#fff" /><path d="M14,14L7,23M20,11l1,3-5,4-8,4" fill="none" stroke="#fff" strokeWidth="1.2" />
      </>
    ),
  };
  return <svg width="30" height="30" viewBox="0 0 30 30" overflow="visible" aria-hidden="true">{art[kind]}</svg>;
};

const StudyArt = () => (
  <svg width="66" height="38" viewBox="0 0 66 38" aria-hidden="true">
    <path d="M0,33L17,21H56l8,8q-1,4-4,6H0z" fill="#e8c39a" /><path d="M0,33H62l-4,3H0z" fill="#b98a5e" />
    <path d="M10,13l20-4 4,17-20,6z" fill="#3f9c4b" /><path d="M10,11l10-1 10-2 3,16-18,5z" fill="#f7f5f2" /><path d="M20,10l4,17" stroke="#bbb" /><path d="M13,15l5-1M14,19l5-1M23,13l5-1M24,17l5-1" stroke="#888" />
    <path d="M26,17L34,6l3,2-8,10z" fill="#f5a623" /><circle cx="36" cy="6" r="2.5" fill="#f0584a" />
    <rect x="48" y="1" width="9" height="8" rx="4" fill="none" stroke="#0b57c0" strokeWidth="2" /><path d="M43,28V12q0-9 9-9t9,9V28q0,2-2,2H45q-2,0-2-2z" fill="#0a80f5" /><path d="M45,20q7-6 14,0v8H45z" fill="#1460d0" /><path d="M46,26h12" stroke="#b58cf5" strokeWidth="2" />
    <path d="M6,3l1.5,3 3,1.5-3,1.5L6,12 4.5,9 2,7.5 4.5,6z" fill="#d96cf0" /><circle cx="38" cy="18" r="2" fill="#59c8e0" /><circle cx="64" cy="8" r="2" fill="#f5a000" />
  </svg>
);

/* ---------- taskbar ---------- */

const Taskbar = styled.footer`
  display: grid;
  grid-template-columns: 1fr auto 1fr;
  align-items: center;
  flex: 0 0 60px;
  background: #202020;
  border-top: 1px solid #3a3a3a;
  color: #fff;
  font-size: 14px;
`;

const AppRow = styled.div`
  grid-column: 2;
  display: flex;
  align-items: center;
  padding-left: 2px;
`;

const Search = styled.label`
  display: flex;
  align-items: center;
  width: 275px;
  height: 40px;
  margin: 0 3px;
  padding: 0 5px 0 14px;
  border-radius: 20px;
  background: #383838;
  input {
    flex: 1;
    min-width: 0;
    padding: 0 0 0 12px;
    border: 0;
    outline: 0;
    background: none;
    color: #fff;
    font: 16px ${ui};
  }
  input::placeholder { color: #cfcfcf; opacity: 1; }
`;

const AppButton = styled.button<{ $run?: boolean; $active?: boolean }>`
  position: relative;
  display: flex;
  align-items: center;
  justify-content: center;
  width: 49px;
  height: 50px;
  margin: 0 3px;
  border-radius: 5px;
  background: ${p => (p.$active ? '#2d2d2d' : 'transparent')};
  &::after {
    content: '';
    position: absolute;
    bottom: 1px;
    width: ${p => (p.$active ? 20 : 8)}px;
    height: 4px;
    border-radius: 2px;
    background: ${p => (p.$active ? '#4cc2ff' : p.$run ? '#9a9a9a' : 'transparent')};
  }
`;

const AppBadge = styled.span`
  position: absolute;
  right: 3px;
  top: 4px;
`;

const Tray = styled.div`
  grid-column: 3;
  display: flex;
  align-items: center;
  justify-self: end;
  padding-right: 25px;
  line-height: 20px;
`;

const TrayText = styled.div<{ $right?: boolean }>`
  margin: 0 ${p => (p.$right ? 14 : 22)}px 0 ${p => (p.$right ? 24 : 26)}px;
  text-align: ${p => (p.$right ? 'right' : 'center')};
  white-space: pre-line;
`;

const TrayIcons = styled.div`
  display: flex;
  align-items: center;
  gap: 10px;
`;

const Count = styled.span`
  width: 20px;
  height: 20px;
  border-radius: 50%;
  background: #4cc2ff;
  color: #10202a;
  font-size: 12px;
  text-align: center;
`;

const tabs = [
  ['github', 'Hungry-Beast/hacking-bad-'], ['s', 'WELCOME TO THE NERIST W'], ['figma', 'hacktathon – Figma'],
  ['react', 'React App'], ['leaflet', 'Popup with Marker | React L'], ['react', 'React App'],
];

const bookmarks: [string, string, number][] = [
  ['apps', 'Apps', 83], ['gmail', 'Inbox (1,337)', 137], ['youtube', 'YouTube', 107], ['home', 'HOME', 94],
  ['leetcode', 'LeetCode - The Wo...', 189], ['whatsapp', 'WhatsApp', 119], ['github', 'GitHub', 98], ['docs', 'Google Docs', 134],
  ['square', '', 40], ['github', 'hacktoberfest · GitH...', 192], ['dev', 'DEV Community...', 170], ['tuf', 'Strivers A2Z DSA C...', 186], ['sq', 'Home', 80],
];

const apps: [string, string, boolean][] = [
  ['taskview', 'Task view', false], ['chromeP', 'Chrome', false], ['code', 'VS Code', true], ['folder', 'Explorer', true], ['teams', 'Teams', false],
  ['chrome', 'Chrome', true], ['edge', 'Edge', false], ['terminal', 'Terminal', true], ['settings', 'Settings', true], ['chromeG', 'Chrome', true], ['postman', 'Postman', true],
];

export default function App() {
  return (
    <Screen>
      <GlobalStyle />
      <Browser>
        <TabStrip>
          {tabs.map(([icon, title], i) => (
            <Tab key={i} $active={i === 3} $divider={i !== 2 && i !== 3}>
              <Favicon kind={icon} />
              <TabTitle>{title}</TabTitle>
              <IconButton aria-label="Close tab"><Cross /></IconButton>
            </Tab>
          ))}
          <IconButton $w={54} aria-label="New tab"><svg width="16" height="16" {...line}><path d="M8,1V15M1,8H15" /></svg></IconButton>
          <WindowControls>
            <IconButton $w={57} aria-label="Search tabs"><svg width="14" height="8" {...line} strokeWidth="1"><path d="M1,1l6,6 6-6" /></svg></IconButton>
            <IconButton $w={57} aria-label="Minimise"><svg width="14" height="1"><path d="M0,0H14V1H0z" fill="#fff" /></svg></IconButton>
            <IconButton $w={57} aria-label="Restore"><svg width="14" height="14" {...line} strokeWidth="1"><rect x="1" y="3" width="10" height="10" rx="2" /><path d="M4,1H11q2,0 2,2V10" /></svg></IconButton>
            <IconButton $w={58} aria-label="Close window"><svg width="14" height="14" {...line} strokeWidth="1"><path d="M1,1L13,13M13,1L1,13" /></svg></IconButton>
          </WindowControls>
        </TabStrip>
        <Toolbar>
          <IconButton $w={40} aria-label="Back"><svg width="18" height="16" {...line}><path d="M17,8H2M9,1L2,8l7,7" /></svg></IconButton>
          <IconButton $w={40} aria-label="Forward"><svg width="18" height="16" {...line} stroke="#7d7d7d"><path d="M1,8H16M9,1l7,7-7,7" /></svg></IconButton>
          <IconButton $w={41} aria-label="Reload"><svg width="18" height="18" {...line}><path d="M15,5A7,7 0 1 0 16,10" /><path d="M17,1v7h-7z" fill="currentColor" stroke="none" /></svg></IconButton>
          <IconButton $w={40} aria-label="Home"><svg width="18" height="18" {...line}><path d="M1,9L9,2l8,7M4,8v8h10V8" /></svg></IconButton>
          <Omnibox>
            <svg width="18" height="18" fill="none" stroke="#9aa0a6" strokeWidth="2"><circle cx="9" cy="9" r="7" /><path d="M9,8v5M9,5v2" /></svg>
            <Url><b>localhost</b>:3000/home/users</Url>
            <Address aria-label="Address" />
            <IconButton $w={40} aria-label="Location"><MdLocationOn size={23} color="#c4c6c9" /></IconButton>
            <IconButton $w={40} aria-label="Install"><svg width="20" height="20" {...line} stroke="#c4c6c9"><path d="M9,3H2V14H18V11M6,17h8M13,2v8M9,7l4,4 4-4" /></svg></IconButton>
            <IconButton $w={40} aria-label="Share"><svg width="20" height="20" {...line} stroke="#c4c6c9" strokeWidth="1.5"><path d="M4,6H1V19H15V15M5,14q1-7 7-8V2l7,6-7,6v-4q-4,0-7,4z" /></svg></IconButton>
            <IconButton $w={40} aria-label="Bookmark"><MdStarBorder size={23} color="#d4d6d9" /></IconButton>
          </Omnibox>
          <IconButton $w={40} aria-label="Json viewer"><svg width="18" height="14" fill="none" stroke="#1c1c1c" strokeWidth="1.5"><path d="M4,2q-2,0-2,2t-1,3q1,1 1,3t2,2M14,2q2,0 2,2t1,3q-1,1-1,3t-2,2M6,5h6M6,7h6M6,9h6" /></svg></IconButton>
          <IconButton $w={41} aria-label="Extensions"><MdExtension size={21} /></IconButton>
          <IconButton $w={40} aria-label="Side panel"><svg width="18" height="18"><path d="M0,0H18V18H0zM3,3V15H10V3z" fill="#fff" fillRule="evenodd" /></svg></IconButton>
          <IconButton $w={42} aria-label="Profile"><Avatar $size={28} /></IconButton>
          <IconButton $w={36} aria-label="Menu"><svg width="4" height="18" fill="#fff"><circle cx="2" cy="2" r="2" /><circle cx="2" cy="9" r="2" /><circle cx="2" cy="16" r="2" /></svg></IconButton>
        </Toolbar>
        <Bookmarks>
          {bookmarks.map(([icon, text, w], i) => (
            <Bookmark key={i} href="#" $w={w}><BookmarkIcon kind={icon} />{text}</Bookmark>
          ))}
          <More>»</More>
          <Separator />
          <Bookmark href="#"><BookmarkIcon kind="folder" />Other bookmarks</Bookmark>
        </Bookmarks>
      </Browser>

      <Page>
        <Sidebar>
          <Brand>WM</Brand>
          <Menu>
            <li><a href="#route">Set Route</a></li>
            <li><a href="#drivers">Drivers</a></li>
            <li><a href="#users">Users</a></li>
          </Menu>
        </Sidebar>
        <Main>
          <Title>Users</Title>
          <MapBox>
            <MapArt />
            {[238, 277, 314, 346].map(y => (
              <Marker key={y} $x={770} $y={y} aria-label="Bin"><MdDelete size={30} /></Marker>
            ))}
            <ZoomControl>
              <ZoomButton aria-label="Zoom in"><svg width="16" height="16" {...line}><path d="M8,0V16M0,8H16" /></svg></ZoomButton>
              <ZoomButton aria-label="Zoom out"><svg width="16" height="16" {...line}><path d="M0,8H16" /></svg></ZoomButton>
            </ZoomControl>
            <Attribution>
              <svg width="15" height="10"><path d="M0,0H15V5H0z" fill="#4c7be1" /><path d="M0,5H15V10H0z" fill="#ffd500" /></svg>
              <span><a href="#leaflet">Leaflet</a> | © <a href="#osm">OpenStreetMap</a> contributors</span>
            </Attribution>
          </MapBox>
          <SectionHead>
            <SectionTitle>Users</SectionTitle>
            <AddButton>Add User</AddButton>
          </SectionHead>
          <TableCard />
        </Main>
        <ScrollTrack>
          <svg width="10" height="6" fill="#a3a3a3"><path d="M0,6L5,0l5,6z" /></svg>
          <ScrollArea><ScrollThumb /></ScrollArea>
          <svg width="10" height="6" fill="#505050"><path d="M0,0L5,6l5-6z" /></svg>
        </ScrollTrack>
      </Page>

      <Taskbar>
        <AppRow>
          <AppButton aria-label="Start"><AppArt kind="windows" /></AppButton>
          <Search>
            <svg width="19" height="19" fill="none" stroke="#ddd" strokeWidth="2"><circle cx="8" cy="8" r="7" /><path d="M13,13l5,5" /></svg>
            <input placeholder="Search" aria-label="Search" />
            <StudyArt />
          </Search>
          {apps.map(([kind, name, run], i) => (
            <AppButton key={kind} aria-label={name} $run={run} $active={i === 5}>
              <AppArt kind={kind} />
              {i === 5 && <AppBadge><Avatar $size={20} /></AppBadge>}
            </AppButton>
          ))}
        </AppRow>
        <Tray>
          <svg width="14" height="9" {...line}><path d="M1,8l6-6 6,6" /></svg>
          <TrayText>{'ENG\nIN'}</TrayText>
          <TrayIcons>
            <svg width="20" height="16" {...line} strokeWidth="1.5"><path d="M1,6Q10,-3 19,6M4,9q6-6 12,0M7,12q3-3 6,0" /><circle cx="10" cy="14" r="1" fill="#fff" /></svg>
            <svg width="20" height="18" {...line} strokeWidth="1.5"><path d="M1,6H4L9,2V16L4,12H1zM12,6q2,3 0,6" /><path d="M14,4q4,5 0,10M17,2q5,7 0,14" stroke="#666" /></svg>
            <svg width="21" height="18" {...line} strokeWidth="1.5"><rect x="2" y="5" width="16" height="11" rx="3" /><path d="M7,7h9v7H5z" fill="#fff" /><path d="M19,9v3" strokeWidth="2" /><path d="M4,0L1,7h3L2,12 8,5H5L7,0z" fill="#fff" stroke="#202020" strokeWidth="1" /></svg>
          </TrayIcons>
          <TrayText $right>{'20:33\n09-04-2023'}</TrayText>
          <Count>1</Count>
        </Tray>
      </Taskbar>
    </Screen>
  );
}
